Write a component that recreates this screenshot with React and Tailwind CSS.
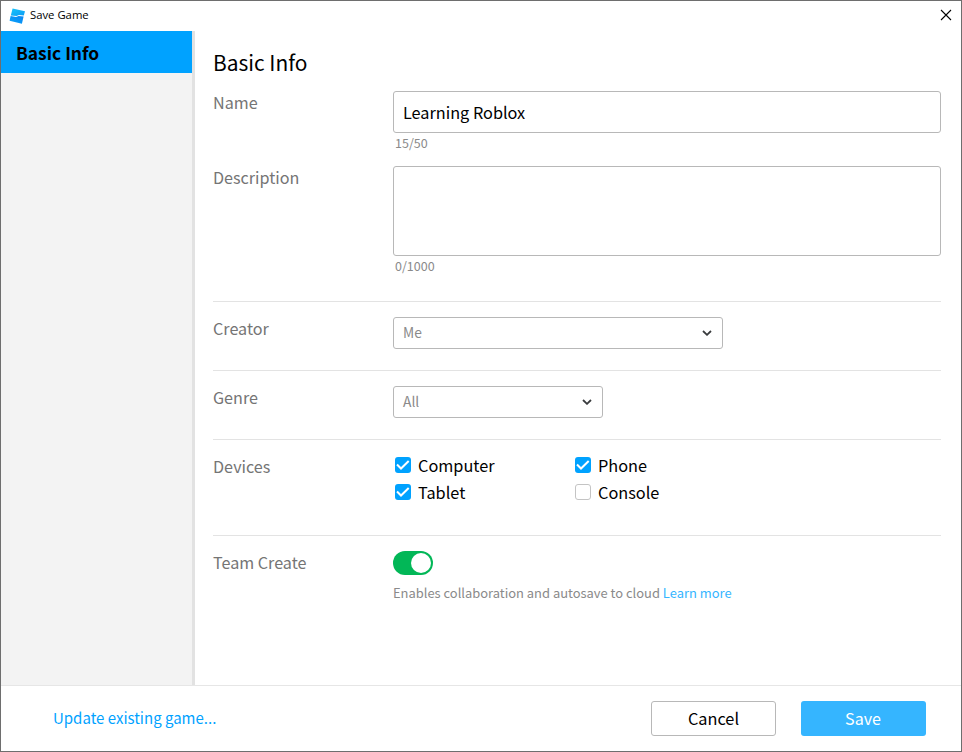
const Box = ({ on }) => (
  <span className={`mb-[2px] flex h-4 w-4 items-center justify-center rounded-[3px] ${on ? "bg-[#00a2ff]" : "border border-[#c4c4c4] bg-white"}`}>
    {on && (
      <svg width="14" height="10" viewBox="0 0 14 10" fill="none" stroke="#fff" strokeWidth="2">
        <path d="M1 4.5L5 8.5L12.7 1" />
      </svg>
    )}
  </span>
);

const Device = ({ name, on }) => (
  <div className="flex h-[27px] w-[180px] items-center gap-[7px] text-[16.3px] text-black">
    <Box on={on} />
    <span>{name}</span>
  </div>
);

const Chevron = () => (
  <svg width="10" height="6" viewBox="0 0 10 6" fill="none" stroke="#393b3d" strokeWidth="1.8">
    <path d="M1 1L5 4.8L9 1" />
  </svg>
);

const label = "w-[180px] shrink-0 text-[16.15px] leading-[22px] text-[#757575]";

export default function App() {
  return (
    <div className="flex h-[752px] w-[962px] flex-col border border-[#6e6e6e] bg-white font-['Noto_Sans_CJK_SC',sans-serif] text-black">
      <header className="flex h-[30px] shrink-0 items-center pl-2 pr-[9px]">
        <svg className="mb-px" width="16" height="16" viewBox="0 0 16 16">
          <defs>
            <linearGradient id="top" x1="0" y1="0" x2="1" y2="1">
              <stop offset="0" stopColor="#18c4fa" />
              <stop offset="1" stopColor="#0a9cf5" />
            </linearGradient>
            <linearGradient id="bottom" x1="1" y1="0" x2="0" y2="1">
              <stop offset="0" stopColor="#0a84f0" />
              <stop offset="1" stopColor="#0aa5fb" />
            </linearGradient>
          </defs>
          <path d="M3.6 0.4L16 3.2L14.8 7.6L10 6.9L7.6 8L1.8 7.4Z" fill="url(#top)" />
          <path d="M1.6 8.1L7 9.1L9.6 8L14.6 8.5L12.9 15.8L0.6 12.7Z" fill="url(#bottom)" />
        </svg>
        <span className="mb-px ml-[5px] flex-1 font-['Open_Sans',sans-serif] text-[11.3px]">Save Game</span>
        <svg className="mb-[2px]" width="12" height="12" viewBox="0 0 12 12" stroke="#000" strokeWidth="1.1">
          <path d="M1 1L11 11M11 1L1 11" />
        </svg>
      </header>
      <div className="flex h-[654px] shrink-0">
        <aside className="w-[194px] shrink-0 border-r-[3px] border-[#e2e2e2] bg-[#f3f3f3]">
          <div className="flex h-[42px] items-center bg-[#00a2ff] pl-[15px] pt-[2px] text-[17.4px] font-bold">Basic Info</div>
        </aside>
        <main className="flex-1 pl-[18px] pr-5">
          <h1 className="pt-[16px] text-[20.9px] leading-[30px]">Basic Info</h1>
          <section className="flex pt-[14px]">
            <div className={label}>Name</div>
            <div className="flex-1">
              <div className="flex h-[42px] items-center rounded-[3px] border border-[#b8b8b8] px-[9px] text-[16.25px]">Learning Roblox</div>
              <div className="h-[33px] pl-0.5 text-[12.5px] leading-5 text-[#8a8a8a]">15/50</div>
            </div>
          </section>
          <section className="flex">
            <div className={label}>Description</div>
            <div className="flex-1">
              <div className="h-[90px] rounded-[3px] border border-[#b8b8b8]" />
              <div className="h-[45px] pl-0.5 text-[12.5px] leading-5 text-[#8a8a8a]">0/1000</div>
            </div>
          </section>
          <section className="flex h-[69px] border-t border-[#e3e3e3] pt-[15px]">
            <div className={label}>Creator</div>
            <div className="flex h-8 w-[330px] items-center justify-between rounded-[3px] border border-[#b8b8b8] pl-[9px] pr-[10px] text-[13.8px] leading-5 text-[#8a8a8a]"><span className="mb-[2px]">Me</span><Chevron /></div>
          </section>
          <section className="flex h-[69px] border-t border-[#e3e3e3] pt-[15px]">
            <div className={label}>Genre</div>
            <div className="flex h-8 w-[210px] items-center justify-between rounded-[3px] border border-[#b8b8b8] pl-[9px] pr-[10px] text-[13.8px] leading-5 text-[#8a8a8a]"><span className="mb-[2px]">All</span><Chevron /></div>
          </section>
          <section className="flex h-[96px] border-t border-[#e3e3e3] pt-[12px]">
            <div className={`${label} pt-[3px]`}>Devices</div>
            <div className="flex w-[362px] flex-wrap content-start pl-0.5">
              <Device name="Computer" on />
              <Device name="Phone" on />
              <Device name="Tablet" on />
              <Device name="Console" />
            </div>
          </section>
          <section className="flex border-t border-[#e3e3e3] pt-[15px]">
            <div className={label}>Team Create</div>
            <div>
              <div className="flex h-6 w-10 items-center justify-end rounded-full bg-[#02b757] pr-0.5"><div className="h-5 w-5 rounded-full bg-white" /></div>
              <p className="mt-2 text-[12.93px] leading-5 text-[#8a8a8a]">Enables collaboration and autosave to cloud <a className="text-[#35b5ff]">Learn more</a></p>
            </div>
          </section>
        </main>
      </div>
      <footer className="flex flex-1 items-center border-t border-[#e6e6e6] pl-[52px] pr-[35px]">
        <a className="flex-1 pb-px text-[15px] text-[#00a2ff]">Update existing game...</a>
        <button className="mr-[25px] h-[35px] w-[125px] rounded-[3px] border border-[#b8b8b8] text-[16.3px]">Cancel</button>
        <button className="h-[35px] w-[125px] rounded-[3px] bg-[#35b5ff] pr-px text-[16.1px] text-white">Save</button>
      </footer>
    </div>
  );
}
